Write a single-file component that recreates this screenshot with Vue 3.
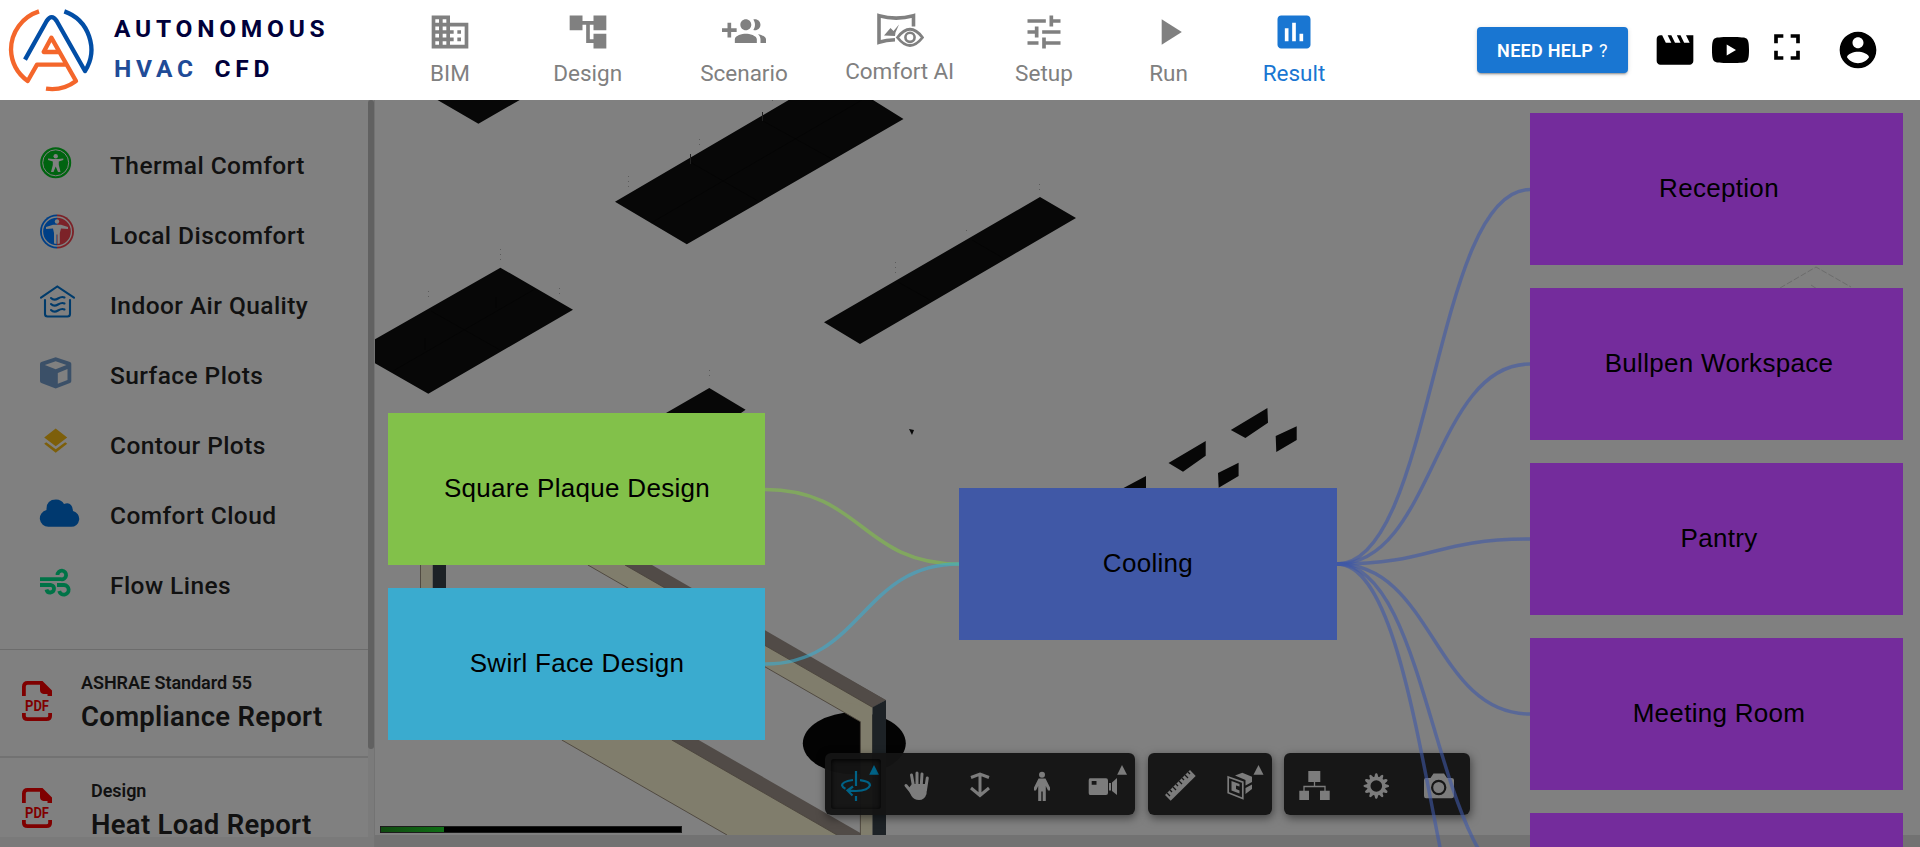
<script setup>
const navItems = [
  { id: 'bim', label: 'BIM', path: 'M12 7V3H2v18h20V7H12zM6 19H4v-2h2v2zm0-4H4v-2h2v2zm0-4H4V9h2v2zm0-4H4V5h2v2zm4 12H8v-2h2v2zm0-4H8v-2h2v2zm0-4H8V9h2v2zm0-4H8V5h2v2zm10 12h-8v-2h2v-2h-2v-2h2v-2h-2V9h8v10zm-2-8h-2v2h2v-2zm0 4h-2v2h2v-2z' },
  { id: 'design', label: 'Design', path: 'M22 11V3h-7v3H9V3H2v8h7V8h2v10h4v3h7v-8h-7v3h-2V8h2v3z' },
  { id: 'scenario', label: 'Scenario', path: 'M8 10H5V7H3v3H0v2h3v3h2v-3h3v-2zm10 1c1.66 0 2.99-1.34 2.99-3S19.66 5 18 5c-.32 0-.63.05-.91.14.57.81.9 1.79.9 2.86s-.34 2.04-.9 2.86c.28.09.59.14.91.14zm-5 0c1.66 0 2.99-1.34 2.99-3S14.66 5 13 5c-1.66 0-3 1.34-3 3s1.34 3 3 3zm6.62 2.16c.83.73 1.38 1.66 1.38 2.84v2h3v-2c0-1.54-2.37-2.49-4.38-2.84zM13 13c-2 0-6 1-6 3v2h12v-2c0-2-4-3-6-3z' },
  { id: 'comfort', label: 'Comfort AI' },
  { id: 'setup', label: 'Setup', path: 'M3 17v2h6v-2H3zM3 5v2h10V5H3zm10 16v-2h8v-2h-8v-2h-2v6h2zM7 9v2H3v2h4v2h2V9H7zm14 4v-2H11v2h10zm-6-4h2V7h4V5h-4V3h-2v6z' },
  { id: 'run', label: 'Run', path: 'M8 5v14l11-7z' },
  { id: 'result', label: 'Result', active: true, path: 'M19 3H5c-1.1 0-2 .9-2 2v14c0 1.1.9 2 2 2h14c1.1 0 2-.9 2-2V5c0-1.1-.9-2-2-2zM9 17H7v-7h2v7zm4 0h-2V7h2v10zm4 0h-2v-4h2v4z' },
]
const menu = ['Thermal Comfort', 'Local Discomfort', 'Indoor Air Quality', 'Surface Plots', 'Contour Plots', 'Comfort Cloud', 'Flow Lines']
const reports = [
  { kind: 'ASHRAE Standard 55', name: 'Compliance Report' },
  { kind: 'Design', name: 'Heat Load Report' },
]
const nodes = [
  { x: 388, y: 413, w: 377, fill: '#82c14a', label: 'Square Plaque Design' },
  { x: 388, y: 588, w: 377, fill: '#3aabcf', label: 'Swirl Face Design' },
  { x: 959, y: 488, w: 378, fill: '#4058a6', label: 'Cooling' },
  { x: 1530, y: 113, w: 373, fill: '#742c9c', label: 'Reception' },
  { x: 1530, y: 288, w: 373, fill: '#742c9c', label: 'Bullpen Workspace' },
  { x: 1530, y: 463, w: 373, fill: '#742c9c', label: 'Pantry' },
  { x: 1530, y: 638, w: 373, fill: '#742c9c', label: 'Meeting Room' },
  { x: 1530, y: 813, w: 373, fill: '#742c9c', label: '' },
]
const curve = (x1, y1, x2, y2) => {
  const m = (x1 + x2) / 2
  return `M${x1} ${y1}C${m} ${y1} ${m} ${y2} ${x2} ${y2}`
}
const links = [
  { d: curve(765, 489.5, 959, 564), c: '#82c14a' },
  { d: curve(765, 664, 959, 564), c: '#3aabcf' },
  ...[189.5, 364, 539, 714, 889, 1064].map((y) => ({ d: curve(1337, 564, 1530, y), c: '#4058a6' })),
]
const tools = [['orbit', 'pan', 'zoom', 'walk', 'video'], ['ruler', 'section'], ['tree', 'gear', 'camera']]
const teeth = Array.from({ length: 12 }, (_, i) => i * 30)
const ticks = [0, 1, 2, 3, 4, 5, 6, 7]
</script>

<template>
  <div class="page">
    <header class="header">
      <div class="brand">
        <svg class="logo" width="100" height="100" viewBox="0 0 300 300" fill="none" stroke-width="13" stroke-linejoin="round">
          <path stroke="#f4662b" d="M117 34A121 121 0 0 0 33 149A121 121 0 0 0 83 243L111 194H196M178 156H131L154 113L228 243A121 121 0 0 1 138 266" />
          <path stroke="#024ea6" d="M75 179L140 63Q155 40 170 63L255 213A121 121 0 0 0 193 34" />
        </svg>
        <div class="brand-text">
          <div>AUTONOMOUS</div>
          <div class="line2"><span class="hvac">HVAC</span> <span>CFD</span></div>
        </div>
      </div>
      <nav class="nav">
        <a v-for="n in navItems" :key="n.id" class="nav-item" :class="[n.id, { active: n.active }]">
          <svg v-if="n.path" width="44" height="44" viewBox="0 0 24 24" fill="currentColor"><path :d="n.path" /></svg>
          <svg v-else width="48" height="44" viewBox="0 0 48 44" fill="none" stroke="currentColor">
            <path stroke-width="3.6" d="M19 29.700Q10 30 3 32.300V5.700Q20 10.500 37.500 5.700V16.500" />
            <path fill="currentColor" stroke="none" d="M8 25.500L14.500 18L17.500 21L23 14.500L19.500 22.500L19 26Z" />
            <path stroke-width="2.800" d="M21.500 27.500Q34 11 46.500 27.500Q34 43.500 21.500 27.500Z" />
            <circle cx="34" cy="27.300" r="4.600" stroke-width="2.600" />
          </svg>
          <span>{{ n.label }}</span>
        </a>
      </nav>
      <div class="actions">
        <button class="help">NEED HELP <span>?</span></button>
        <svg class="movie" width="44" height="44" viewBox="0 0 24 24"><path d="m18 4 2 4h-3l-2-4h-2l2 4h-3l-2-4H8l2 4H7L5 4H4c-1.1 0-1.99.9-1.99 2L2 18c0 1.1.9 2 2 2h16c1.1 0 2-.9 2-2V4h-4z" /></svg>
        <svg class="tube" width="37" height="26" viewBox="0 0 37 26"><path fill-rule="evenodd" d="M18.500 0C29 0 33 .5 34.500 1.500C36.500 3 37 7 37 13S36.500 23 34.500 24.500C33 25.500 29 26 18.500 26S4 25.500 2.500 24.500C.5 23 0 19 0 13S.5 3 2.500 1.500C4 .5 8 0 18.500 0ZM14.700 7.500V18.500L24 13Z" /></svg>
        <svg class="full" width="44" height="44" viewBox="0 0 24 24"><path d="M7 14H5v5h5v-2H7v-3zm-2-4h2V7h3V5H5v5zm12 7h-3v2h5v-5h-2v3zM14 5v2h3v3h2V5h-5z" /></svg>
        <svg class="account" width="44" height="44" viewBox="0 0 24 24"><path d="M12 2C6.480 2 2 6.480 2 12s4.480 10 10 10 10-4.480 10-10S17.520 2 12 2zm0 3c1.660 0 3 1.340 3 3s-1.340 3-3 3-3-1.340-3-3 1.340-3 3-3zm0 14.200c-2.500 0-4.710-1.280-6-3.220.03-1.990 4-3.080 6-3.080 1.990 0 5.970 1.090 6 3.080-1.290 1.940-3.500 3.220-6 3.220z" /></svg>
      </div>
    </header>

    <main class="main">
      <aside class="sidebar">
        <div class="side-scroll">
          <ul class="menu">
            <li v-for="(m, i) in menu" :key="m">
              <svg width="44" height="40" viewBox="0 0 44 40" fill="none">
                <g v-if="i === 0">
                  <circle cx="15.700" cy="17.800" r="15.500" fill="#006410" /><circle cx="15.700" cy="17.800" r="13" stroke="#808080" />
                  <circle cx="15.700" cy="11.200" r="2.200" fill="#808080" />
                  <path fill="#808080" d="M8 13.500L13 14H18.500L23.300 13.500V15L18.800 16.500V20L20.500 27H18L15.700 21.500L13.500 27H11L12.800 20V16.500L8 15Z" />
                </g>
                <g v-else-if="i === 1">
                  <path fill="#003f86" d="M17-.5A17 17 0 0 0 17 33.500Z" /><path fill="#7c2228" d="M17-.5A17 17 0 0 1 17 33.500Z" />
                  <circle cx="17" cy="16.500" r="14.500" stroke="#808080" stroke-width="1.300" />
                  <circle cx="17" cy="6.500" r="2.200" fill="#808080" />
                  <path fill="#808080" d="M6 12L13 9.800H21L28 12V14L21 13.500L19.800 18V28.500L17.500 29V19.500H16.500V29L14 28.500V18L13 13.500L6 14Z" />
                </g>
                <g v-else-if="i === 2" stroke="#003b6b" stroke-width="2.100" stroke-linecap="round">
                  <path d="M1 12.700L17.300 1.500L34 12.700M5 15V29Q5 31.500 7.500 31.500H27.500Q30 31.500 30 29V15" />
                  <path d="M11 13Q14 16 18 13.500T24.500 12.500M11 19Q14 22 18 19.500T24.500 18.500M11 25Q14 28 18 25.500T24.500 24.500" />
                </g>
                <g v-else-if="i === 3">
                  <path fill="#3b5068" d="M15.700 2.200L30 7Q31.300 7.600 31.300 9V26Q31.300 27.400 30 28L15.700 33.500L1.300 28Q0 27.400 0 26V9Q0 7.600 1.300 7Z" />
                  <path fill="#808080" d="M15.700 6.300L26.500 10L15.700 14.200L4.800 10ZM17.800 18L27.500 14V25L17.800 28.800Z" />
                </g>
                <g v-else-if="i === 4" fill="#7d5f0a">
                  <path d="M15.700 3.500L27.200 12.400L15.700 21.300L4.200 12.400ZM15.700 24.300L25.200 17.200L27.200 18.700L15.700 27.700L4.200 18.700L6.200 17.200Z" />
                </g>
                <path v-else-if="i === 5" fill="#00396f" d="M8.500 31.800A8.500 8.500 0 0 1 6.500 15Q6 4.500 16 4.500Q21.500 4.500 24 9Q32 6 33 16A8 8 0 0 1 31 31.800Z" />
                <g v-else stroke="#007347" stroke-width="3.800">
                  <path d="M0 14.200H21A4.300 4.300 0 1 0 17.500 10M0 20H11A3.800 3.800 0 1 1 6.500 24.500M17 20H24A4.800 4.800 0 1 1 19.200 26" />
                </g>
              </svg>
              <span>{{ m }}</span>
            </li>
          </ul>
          <section v-for="(r, i) in reports" :key="r.name" class="report" :class="{ second: i === 1 }">
            <svg width="30" height="40" viewBox="0 0 30 40">
              <path fill="none" stroke="#7f0000" stroke-width="3.800" d="M1.900 15V5.500Q1.900 1.900 5.500 1.900H19M1.900 32V35Q1.900 38.100 5.500 38.100H24.500Q28.100 38.100 28.100 35V32" />
              <path fill="#7f0000" d="M19 0H20.500L30 9.500V15H25.500V13H21.500Q18 12.500 18 9V4Z" />
              <text x="3" y="29.700" textLength="24" lengthAdjust="spacingAndGlyphs">PDF</text>
            </svg>
            <div><p class="kind">{{ r.kind }}</p><p class="name">{{ r.name }}</p></div>
          </section>
        </div>
        <div class="track"><div class="thumb"></div></div>
      </aside>

      <section class="viewer">
        <svg class="scene" width="1545" height="735" viewBox="375 100 1545 735">
          <g fill="#070707">
            <path d="M437.500 100L478.400 123.700L519.700 100ZM615 201.700L788.700 100H873L903.500 119L686.800 244.300ZM824 322.300L860 344L1076 218L1040 197ZM375 339.300L500.400 267.700L573 309.700L428.300 393.700L375 363.300ZM666 413L709.300 388L745.600 409.700L741 413Z" />
            <path d="M1230.800 430L1267.400 408L1268 422.700L1245.400 438ZM1168.500 463L1205.700 441V455.700L1183 471.700ZM1275.700 436L1296.700 426.300V440L1276.300 452ZM1218 473L1238.600 462.700V476L1218.700 487.700ZM1123.500 488L1146 476V488Z" />
            <path d="M909 429L914 430L912 435Z" />
          </g>
          <path stroke="#000" stroke-width=".6" stroke-opacity=".6" fill="none" d="M651 223L862 100M763 121L832 159M690 162L758 201M972 240L1003 258M898 282L930 300M393 371L535 289M431 311L500 350M425 338V350M496 297V308" />
          <path stroke="#222" stroke-width="1" d="M690.500 154V164M762.500 112V121" />
          <path stroke="#5c5c5c" stroke-width="1" stroke-dasharray="1 4" d="M500.500 249V261M428.500 291V299M559.500 288V297M628.500 176V188M699.500 139V146M772.500 100V104M1039.500 184V192M966.500 230V233M895.500 262V274M709.500 370V378" />
          <g fill="none" stroke="#6c6c6c"><path stroke-dasharray="6 2" d="M1780 288L1816 267L1851 287" /><path d="M1811 285L1817 289" /></g>
          <path fill="#807d6c" d="M587.900 565H625L872.500 707.300V835H860.400V721.700Z" />
          <path fill="#514b47" d="M625 565H652L885.700 700L872.500 707.300Z" />
          <ellipse cx="854.300" cy="743.300" rx="51.500" ry="31" fill="#030303" />
          <path fill="#807d6c" d="M820 698L872.500 707.300V835H860.400V721.700ZM561.800 740H671.800L837 835H727Z" />
          <path fill="#514b47" d="M671.800 740H698.600L860.400 833V835H837ZM845 677L885.700 700L872.500 707.300L835 685Z" />
          <path fill="#1d2226" d="M872.500 707.300L886 700V835H872.500ZM432.500 565H446V588H432.500Z" />
          <path fill="#807d6c" d="M420.700 565H432.500V588H420.700Z" />
          <path fill="none" stroke="#4b443b" stroke-width=".9" d="M420.500 565V588M587.900 565L860.400 721.700V835M561.800 740L727 835M671.800 740L837 835M625 565L872.500 707.300" />
        </svg>
        <div class="progress"><div></div></div>
        <div class="toolbar">
          <div v-for="(g, gi) in tools" :key="gi" class="group">
            <div v-for="t in g" :key="t" class="tool" :class="t">
              <svg width="62" height="62" viewBox="0 0 62 62" fill="currentColor">
                <path v-if="['orbit', 'video'].includes(t)" d="M49 12L54 21.700H44.200Z" />
                <g v-if="t === 'orbit'" fill="none" stroke="currentColor" stroke-width="2.200">
                  <path d="M28 27Q17 28.500 17 32.300Q17.500 34.500 20.500 35.700M35 27.200Q45 28.500 45 32.300Q43.500 37.600 31 38Q27 38 23 37.300M28 33.500L22.500 37.500L27.500 42.500" /><path d="M31 18V33M31 43V48" />
                </g>
                <g v-else-if="t === 'pan'" fill="none" stroke="currentColor" stroke-linecap="round">
                  <path stroke-width="3" d="M24.500 22L27 36M30 20V36M35 21L34 36M40.300 25L38.500 37M19 32.500L26 41" />
                  <path fill="currentColor" stroke="none" d="M25 31H40L39.500 41Q37.500 47 32 47Q27 47 24.500 43L21 36Z" />
                </g>
                <path v-else-if="t === 'zoom'" fill="none" stroke="currentColor" stroke-width="3" d="M31 21V43M22 24.500L31 21L40 24.500M22 35L31 42.500L40 35" />
                <g v-else-if="t === 'walk'"><circle cx="31" cy="21.700" r="3" /><path d="M27.500 25.500H34.500L39 34.500V37.500H37L34.800 33V48H31.700V38.500H30.300V48H27.200V33L25 37.500H23V34.500Z" /></g>
                <g v-else-if="t === 'video'"><path fill-rule="evenodd" d="M17 25.300H33Q35 25.300 35 27.500V40Q35 42 33 42H17Q15.700 42 15.700 40V27.500Q15.700 25.300 17 25.300ZM18.700 28V31.700H23.500V28ZM39 29.500L44 25V42L39 38ZM36 30H38V37.500H36Z" /></g>
                <g v-else-if="t === 'ruler'"><path d="M17 42L42 17L47.700 23L22.700 47.700Z" /><path v-for="k in ticks" :key="k" stroke="#161616" stroke-width="1.200" :d="`M${19 + k * 3} ${40 - k * 3}l${k % 2 ? 2 : 3} ${k % 2 ? 2 : 3}`" /></g>
                <g v-else-if="t === 'section'">
                  <path d="M48.500 12L53.500 21.700H43.500Z" /><path d="M25 22.500L32.300 19.700L42 23.700V29L35.500 32.500V27ZM35.500 35L42 31.500V36L35.500 41Z" />
                  <path fill="none" stroke="currentColor" stroke-width="1.700" d="M18.200 24L32.800 29.200V45.500L18.200 39.700Z" /><path d="M21.500 28L29.500 31V33.500L26 32.500V36L29.500 37.500V40.500L21.500 37.500Z" />
                </g>
                <g v-else-if="t === 'tree'"><path d="M24.300 18H36.300V29H24.300ZM15.300 37.700H25V47H15.300ZM36 37.700H45.700V47H36Z" /><path fill="none" stroke="currentColor" stroke-width="1.300" d="M30.500 29V33.500M20 38V33.500H41V38" /></g>
                <g v-else-if="t === 'gear'"><circle cx="30.300" cy="33" r="7.600" fill="none" stroke="currentColor" stroke-width="3.600" /><path v-for="a in teeth" :key="a" d="M29 21.500L29.700 20.300H31L31.600 21.500L32.500 25H28.100Z" :transform="`rotate(${a} 30.300 33)`" /></g>
                <g v-else-if="t === 'camera'"><path d="M18 25H22.500L25.500 20.500H36L39 25H43.500Q46 25 46 27V43Q46 45.300 43.500 45.300H18Q16 45.300 16 43V27Q16 25 18 25Z" /><circle cx="30.700" cy="34.500" r="6.600" stroke="#161616" stroke-width="2.200" /></g>
              </svg>
            </div>
          </div>
        </div>
      </section>
    </main>

    <svg class="diagram" width="1920" height="847" viewBox="0 0 1920 847">
      <path v-for="(l, i) in links" :key="i" :d="l.d" :stroke="l.c" stroke-width="3.500" stroke-opacity=".6" fill="none" />
      <g v-for="(n, i) in nodes" :key="i">
        <rect :x="n.x" :y="n.y" :width="n.w" height="152" :fill="n.fill" />
        <text :x="n.x + 189" :y="n.y + 84" text-anchor="middle">{{ n.label }}</text>
      </g>
    </svg>
  </div>
</template>

<style>
body { margin: 0; overflow: hidden; }
</style>

<style scoped>
.page { position: relative; width: 1920px; height: 847px; overflow: hidden; background: #808080; font-family: Roboto, sans-serif; }
.header { height: 100px; background: #fff; display: flex; }
.brand { width: 383px; display: flex; }
.brand-text { margin: 9px 0 0 14px; font-size: 24.500px; font-weight: 700; line-height: 40px; letter-spacing: 4.750px; color: #00003a; white-space: nowrap; }
.line2 { word-spacing: 6px; }
.hvac { color: #204b97; }
.nav { display: grid; grid-template-columns: 134px 141.400px 171.200px 140.200px 148.400px 100.800px 150px; color: #808080; }
.nav-item { display: flex; flex-direction: column; align-items: center; padding-top: 10px; font-size: 22.500px; font-weight: 400; white-space: nowrap; }
.nav-item svg { display: block; }
.nav-item span { line-height: 26px; margin-top: 6px; }
.nav-item.comfort span { margin-top: 4px; letter-spacing: -.1px; }
.nav-item.active { color: #1976d2; }
.actions { display: flex; align-items: flex-start; margin-left: 108px; }
.help { width: 151px; height: 46px; margin-top: 27px; padding: 0; border: 0; border-radius: 4px; background: #1976d2; color: #fff; font: 600 18px Roboto, sans-serif; letter-spacing: .3px; box-shadow: 0 3px 1px -2px rgba(0,0,0,.2), 0 2px 2px rgba(0,0,0,.14), 0 1px 5px rgba(0,0,0,.12); white-space: nowrap; }
.help span { font-weight: 400; margin-left: 1px; }
.movie { margin: 28px 0 0 25px; }
.tube { margin: 37px 0 0 15.500px; }
.full { margin: 25px 0 0 15.500px; }
.account { margin: 28px 0 0 27px; }
.main { height: 747px; display: flex; }
.sidebar { width: 374px; display: flex; height: 747px; border-right: 1px solid #737373; background: #7a7a7a; }
.side-scroll { width: 368px; height: 737px; overflow: hidden; background: #808080; color: #111; }
.menu { list-style: none; margin: 0; padding: 30px 0 29px; border-bottom: 1px solid #6c6c6c; }
.menu li { height: 70px; display: flex; align-items: center; padding-left: 40px; font-size: 24.500px; font-weight: 500; letter-spacing: .43px; white-space: nowrap; }
.menu svg { margin-right: 26px; overflow: visible; }
.report { height: 106px; border-bottom: 2px solid #727272; display: flex; padding-left: 22px; }
.report svg { margin: 31px 29px 0 0; flex: none; overflow: visible; }
.report svg text { font: 700 15px Roboto, sans-serif; fill: #7f0000; }
.report p { margin: 0; font-weight: 600; white-space: nowrap; }
.kind { font-size: 18px; line-height: 22px; padding-top: 22px; letter-spacing: -.05px; }
.report .name { font-size: 27.500px; line-height: 32px; margin-top: 7px; letter-spacing: .3px; }
.second svg { margin: 30px 39px 0 0; }
.track { width: 6px; height: 737px; background: #7b7b7b; }
.thumb { height: 649px; background: #616161; border-radius: 3px; }
.viewer { position: relative; flex: 1; height: 747px; background: #727272; }
.scene { display: block; background: #808080; }
.progress { position: absolute; left: 5px; top: 726px; width: 300px; height: 5px; border: 1px solid #1c1c1c; background: #000; }
.progress div { width: 63px; height: 5px; background: linear-gradient(90deg, #104a10, #0f6e15); }
.toolbar { position: absolute; left: 450px; top: 653px; display: flex; gap: 12.500px; }
.group { display: flex; height: 62px; border-radius: 6px; background: rgba(20,20,20,.97); box-shadow: 1px 3px 10px rgba(0,0,0,.5); }
.tool { position: relative; width: 62px; height: 62px; color: #7c7c7c; }
.tool svg { display: block; }
.orbit { color: #006286; }
.orbit::before { content: ''; position: absolute; left: 6px; top: 6px; width: 50px; height: 50px; border-radius: 3px; box-shadow: inset 0 1px 5px #000; }
.diagram { position: absolute; left: 0; top: 0; pointer-events: none; }
.diagram text { font: 26px "Liberation Sans", Arial, sans-serif; letter-spacing: .3px; fill: #000; }
</style>
